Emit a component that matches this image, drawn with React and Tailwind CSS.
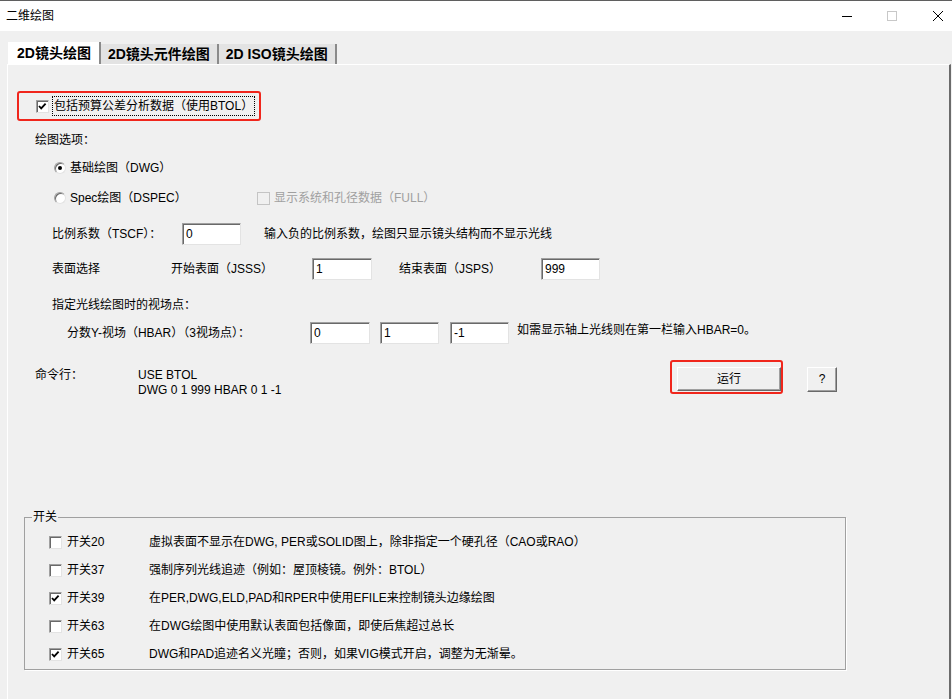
import React from 'react';

const switches = [
  { name: '开关20', on: false, text: '虚拟表面不显示在DWG, PER或SOLID图上，除非指定一个硬孔径（CAO或RAO）' },
  { name: '开关37', on: false, text: '强制序列光线追迹（例如：屋顶棱镜。例外：BTOL）' },
  { name: '开关39', on: true, text: '在PER,DWG,ELD,PAD和RPER中使用EFILE来控制镜头边缘绘图' },
  { name: '开关63', on: false, text: '在DWG绘图中使用默认表面包括像面，即使后焦超过总长' },
  { name: '开关65', on: true, text: 'DWG和PAD追迹名义光瞳；否则，如果VIG模式开启，调整为无渐晕。' },
];

function CheckBox({ checked, disabled }) {
  return (
    <div
      className={`relative w-[13px] h-[13px] shrink-0 border ${
        disabled
          ? 'border-[#c4c4c4] bg-[#f0f0f0]'
          : 'border-t-[#a0a0a0] border-l-[#a0a0a0] border-r-[#e3e3e3] border-b-[#e3e3e3] bg-white shadow-[inset_1px_1px_0_#696969]'
      }`}
    >
      {checked && (
        <svg className="absolute inset-0" width="11" height="11" viewBox="0 0 11 11">
          <path d="M2 5 L4.2 7.4 L8.6 2.6" fill="none" stroke="#000" strokeWidth="1.8" />
        </svg>
      )}
    </div>
  );
}

function Radio({ checked }) {
  return (
    <div className="w-[12px] h-[12px] shrink-0 rounded-full bg-white border border-t-[#a0a0a0] border-l-[#a0a0a0] border-r-[#e3e3e3] border-b-[#e3e3e3] shadow-[inset_1px_1px_0_#696969] flex items-center justify-center">
      {checked && <div className="w-[4px] h-[4px] rounded-full bg-black" />}
    </div>
  );
}

function Field({ value, className }) {
  return (
    <div
      className={`h-[22px] shrink-0 bg-white border border-t-[#a0a0a0] border-l-[#a0a0a0] border-r-[#e3e3e3] border-b-[#e3e3e3] shadow-[inset_1px_1px_0_#696969] pl-[3px] flex items-center ${className}`}
    >
      {value}
    </div>
  );
}

function Button({ children, className }) {
  return (
    <div
      className={`shrink-0 bg-[#f0f0f0] border border-t-white border-l-white border-r-[#696969] border-b-[#696969] shadow-[inset_-1px_-1px_0_#a0a0a0] flex items-center justify-center ${className}`}
    >
      {children}
    </div>
  );
}

export default function App() {
  return (
    <div className="w-[952px] h-[699px] overflow-hidden bg-[#f0f0f0] flex flex-col text-[12px] leading-[15px] text-black font-['Liberation_Sans','Noto_Sans_CJK_SC',sans-serif]">
      {/* title bar */}
      <div className="h-[31px] shrink-0 bg-white border-t border-[#5f5f5f] flex items-center">
        <div className="ml-[6px] text-[12px]">二维绘图</div>
        <div className="ml-auto flex items-center mr-[9px]">
          <div className="w-[10px] h-[1px] bg-black" />
          <div className="ml-[35px] w-[10px] h-[10px] border border-[#c8c8c8]" />
          <svg className="ml-[36px]" width="10" height="10" viewBox="0 0 10 10">
            <path d="M0 0 L10 10 M10 0 L0 10" stroke="#000" strokeWidth="1" />
          </svg>
        </div>
      </div>

      {/* tabs */}
      <div className="h-[33px] shrink-0 pt-[11px] pl-[8px] flex items-end">
        <div className="h-[22px] px-[8px] bg-white border-l border-white border-r-2 border-r-[#8a8a8a] flex items-center text-[14px] font-bold">
          2D镜头绘图
        </div>
        <div className="h-[20px] px-[7px] bg-[#e3e3e3] border-r-2 border-r-[#8a8a8a] flex items-center text-[14px] font-bold">
          2D镜头元件绘图
        </div>
        <div className="h-[20px] px-[7px] bg-[#e3e3e3] border-r-2 border-r-[#8a8a8a] flex items-center text-[14px] font-bold">
          2D ISO镜头绘图
        </div>
      </div>

      {/* panel */}
      <div className="flex-1 ml-[7px] mr-[1px] border-t border-l border-white border-r-2 border-r-[#6b6b6b] flex flex-col">
        <div className="mt-[26px] ml-[9px] w-[244px] h-[30px] border-2 border-[#f0261c] rounded-[3px] flex items-center pl-[17px]">
          <CheckBox checked />
          <div className="ml-[3px] h-[20px] px-[1px] border border-dotted border-black flex items-center">
            包括预算公差分析数据（使用BTOL）
          </div>
        </div>

        <div className="mt-[9px] ml-[27px] h-[20px] flex items-center">绘图选项：</div>

        <div className="mt-[8px] ml-[46px] h-[20px] flex items-center">
          <Radio checked />
          <span className="ml-[4px]">基础绘图（DWG）</span>
        </div>

        <div className="mt-[10px] ml-[46px] h-[20px] flex items-center">
          <div className="w-[203px] flex items-center">
            <Radio />
            <span className="ml-[4px]">Spec绘图（DSPEC）</span>
          </div>
          <CheckBox disabled />
          <span className="ml-[4px] text-[#a0a0a0]">显示系统和孔径数据（FULL）</span>
        </div>

        <div className="mt-[15px] ml-[44px] h-[22px] flex items-center">
          <div className="w-[130px]">比例系数（TSCF）：</div>
          <Field value="0" className="w-[59px]" />
          <div className="ml-[23px]">输入负的比例系数，绘图只显示镜头结构而不显示光线</div>
        </div>

        <div className="mt-[13px] ml-[44px] h-[22px] flex items-center">
          <div className="w-[119px]">表面选择</div>
          <div className="w-[141px]">开始表面（JSSS）</div>
          <Field value="1" className="w-[60px]" />
          <div className="ml-[27px] w-[142px]">结束表面（JSPS）</div>
          <Field value="999" className="w-[59px]" />
        </div>

        <div className="mt-[15px] ml-[44px] h-[20px] flex items-center">指定光线绘图时的视场点：</div>

        <div className="mt-[7px] ml-[59px] h-[22px] flex items-center">
          <div className="w-[243px]">分数Y-视场（HBAR）（3视场点）：</div>
          <Field value="0" className="w-[60px]" />
          <Field value="1" className="ml-[10px] w-[59px]" />
          <Field value="-1" className="ml-[11px] w-[59px]" />
          <div className="ml-[8px] -mt-[6px]">如需显示轴上光线则在第一栏输入HBAR=0。</div>
        </div>

        <div className="mt-[16px] ml-[27px] h-[34px] flex items-start">
          <div className="w-[103px] mt-[8px]">命令行：</div>
          <div className="w-[532px] mt-[8px]">
            <div>USE BTOL</div>
            <div>DWG 0 1 999 HBAR 0 1 -1</div>
          </div>
          <div className="w-[113px] h-[34px] border-2 border-[#f0261c] rounded-[3px] pl-[5px] pt-[5px]">
            <Button className="w-[104px] h-[24px]">运行</Button>
          </div>
          <Button className="ml-[24px] mt-[7px] w-[30px] h-[25px]">?</Button>
        </div>

        <div className="relative mt-[123px] ml-[16px] w-[822px] border border-[#a0a0a0] shadow-[1px_1px_0_#ffffff] pt-[10px] pb-[1px]">
          <div className="absolute left-[7px] -top-[9px] px-[1px] bg-[#f0f0f0] leading-[16px]">开关</div>
          {switches.map((s) => (
            <div key={s.name} className="h-[28px] pl-[24px] flex items-center">
              <CheckBox checked={s.on} />
              <div className="ml-[5px] w-[82px]">{s.name}</div>
              <div>{s.text}</div>
            </div>
          ))}
        </div>
      </div>
    </div>
  );
}
